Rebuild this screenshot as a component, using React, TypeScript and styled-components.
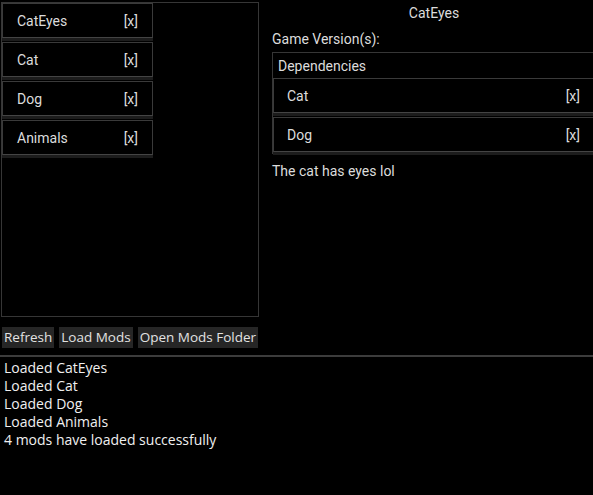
import React from "react";
import styled, { createGlobalStyle } from "styled-components";

const Global = createGlobalStyle`
  html, body { margin: 0; padding: 0; background: #000; overflow: hidden; }
  body { width: 593px; height: 495px; }
  #root { width: 593px; height: 495px; }
`;

const Page = styled.div`
  width: 593px;
  height: 495px;
  background: #000;
  display: flex;
  flex-direction: column;
  overflow: hidden;
`;

const Top = styled.div`
  display: flex;
  padding: 2px 0 0 1px;
  gap: 13px;
`;

const ModList = styled.div`
  width: 256px;
  height: 313px;
  border: 1px solid #363636;
  display: flex;
  flex-direction: column;
  align-items: flex-start;
  gap: 4px;
  flex-shrink: 0;
`;

const Item = styled.div<{ $wide?: boolean }>`
  box-sizing: border-box;
  width: ${(p) => (p.$wide ? "100%" : "151px")};
  height: 35px;
  border: 1px solid #3a3a3a;
  border-bottom-color: #444;
  box-shadow: 0 3px 0 #1c1c1c;
  display: flex;
  align-items: center;
  justify-content: space-between;
  padding: 0 14px 0 ${(p) => (p.$wide ? "13px" : "14px")};
  font-family: Roboto, "Liberation Sans", sans-serif;
  font-size: 14px;
  color: #dcdcdc;
  background: #000;
`;

const Details = styled.div`
  width: 324px;
  flex-shrink: 0;
  display: flex;
  flex-direction: column;
  font-family: Roboto, "Liberation Sans", sans-serif;
  font-size: 14px;
  color: #dcdcdc;
`;

const Title = styled.div`
  text-align: center;
  height: 22px;
  line-height: 22px;
`;

const Label = styled.div`
  height: 28px;
  line-height: 30px;
`;

const DepBox = styled.div`
  border: 1px solid #363636;
  display: flex;
  flex-direction: column;
  padding-bottom: 1px;
`;

const DepHeader = styled.div`
  height: 25px;
  line-height: 26px;
  padding-left: 5px;
`;

const DepList = styled.div`
  display: flex;
  flex-direction: column;
  gap: 4px;
`;

const Description = styled.div`
  margin-top: 7px;
  line-height: 20px;
`;

const Buttons = styled.div`
  display: flex;
  gap: 5px;
  padding: 10px 0 0 2px;
`;

const Button = styled.button`
  font-family: "Open Sans", "Noto Sans", sans-serif;
  font-size: 13.5px;
  color: #e2e2e2;
  background: #262626;
  border: none;
  padding: 0 2px;
  height: 21px;
  line-height: 21px;
  cursor: pointer;
`;

const Separator = styled.div`
  margin-top: 7px;
  height: 2px;
  background: #3c3c3c;
`;

const Log = styled.div`
  padding: 2px 0 0 4px;
  font-family: "Open Sans", "Noto Sans", sans-serif;
  font-size: 14px;
  line-height: 18px;
  color: #f0f0f0;
`;

const mods = ["CatEyes", "Cat", "Dog", "Animals"];
const deps = ["Cat", "Dog"];
const log = [
  "Loaded CatEyes",
  "Loaded Cat",
  "Loaded Dog",
  "Loaded Animals",
  "4 mods have loaded successfully",
];

export default function App() {
  return (
    <Page>
      <Global />
      <Top>
        <ModList>
          {mods.map((m) => (
            <Item key={m}>
              <span>{m}</span>
              <span>[x]</span>
            </Item>
          ))}
        </ModList>
        <Details>
          <Title>CatEyes</Title>
          <Label>Game Version(s):</Label>
          <DepBox>
            <DepHeader>Dependencies</DepHeader>
            <DepList>
              {deps.map((d) => (
                <Item key={d} $wide>
                  <span>{d}</span>
                  <span>[x]</span>
                </Item>
              ))}
            </DepList>
          </DepBox>
          <Description>The cat has eyes lol</Description>
        </Details>
      </Top>
      <Buttons>
        <Button>Refresh</Button>
        <Button>Load Mods</Button>
        <Button>Open Mods Folder</Button>
      </Buttons>
      <Separator />
      <Log>
        {log.map((l) => (
          <div key={l}>{l}</div>
        ))}
      </Log>
    </Page>
  );
}
